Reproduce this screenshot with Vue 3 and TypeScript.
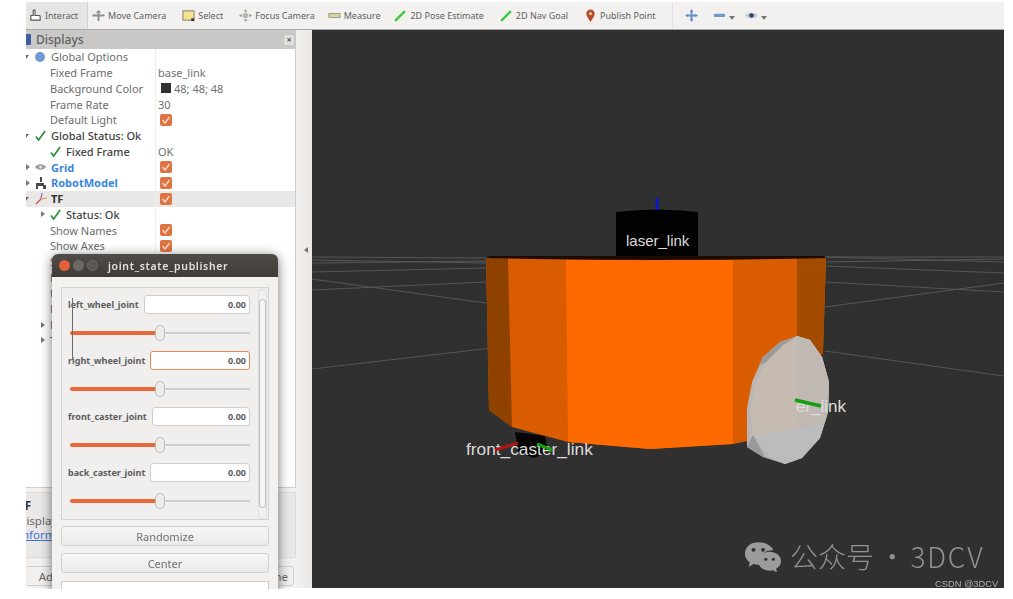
<template>
  <div class="page">
    <div class="shot">
      <div class="toolbar">
        <div
          v-for="tool in tools"
          :key="tool.name"
          class="tool"
          :class="[tool.name, { active: tool.name === 'interact' }]"
        >
          <svg v-if="tool.icon" class="tool-icon" viewBox="0 0 14 14">
            <template v-if="tool.icon === 'hand'">
              <path d="M2 7h9a1 1 0 0 1 1 1v4H2z" fill="#fff" stroke="#555" stroke-width="1.2" />
              <path d="M4.5 7V2a1 1 0 0 1 2 0v5" fill="#fff" stroke="#555" stroke-width="1.2" />
            </template>
            <template v-else-if="tool.icon === 'move'">
              <path d="M7 1l3 3H8v2h4V5l2 2-2 1V8H8v5H6V8H2v1L0 7l2-2v1h4V4H4z" fill="#8d918d" />
            </template>
            <template v-else-if="tool.icon === 'select'">
              <rect x="1" y="2" width="12" height="10" fill="#f7e58c" stroke="#777" />
              <rect x="10" y="10" width="3" height="3" fill="#333" />
            </template>
            <template v-else-if="tool.icon === 'focus'">
              <path d="M7 0l2 3H5zM7 14l2-3H5zM0 7l3-2v4zM14 7l-3-2v4z" fill="#9a9d9a" />
              <circle cx="7" cy="7" r="3" fill="#b5b8b5" />
            </template>
            <template v-else-if="tool.icon === 'ruler'">
              <rect x="1" y="5" width="12" height="4" fill="#d8d39a" stroke="#777" stroke-width=".7" />
            </template>
            <template v-else-if="tool.icon === 'arrow'">
              <path d="M2 12L11 3" stroke="#3ccb3c" stroke-width="2.6" stroke-linecap="round" />
            </template>
            <template v-else-if="tool.icon === 'pin'">
              <path d="M7 14C5 10 2.500 8 2.500 5a4.500 4.500 0 0 1 9 0c0 3-2.500 5-4.500 9z" fill="#b8492b" />
              <circle cx="7" cy="5" r="1.600" fill="#e9d0a8" />
            </template>
            <template v-else-if="tool.icon === 'plus'">
              <path d="M7 0l2 3H8v3h3V5l3 2-3 2V8H8v3h1l-2 3-2-3h1V8H3v1L0 7l3-2v1h3V3H5z" fill="#5f8fd0" />
            </template>
            <template v-else-if="tool.icon === 'minus'">
              <rect x="1" y="5" width="12" height="3.500" rx="1" fill="#6f97d0" />
            </template>
            <template v-else-if="tool.icon === 'eye'">
              <path d="M0 7c3-4 11-4 14 0-3 4-11 4-14 0z" fill="#c3cbd8" />
              <circle cx="7" cy="7" r="2.500" fill="#36456b" />
            </template>
          </svg>
          <span v-if="tool.label">{{ tool.label }}</span>
          <i v-if="tool.menu" class="tool-caret"></i>
        </div>
      </div>

      <div class="main">
        <aside class="dock">
          <div class="dock-head">
            <svg class="dock-icon" viewBox="0 0 12 14">
              <rect x="0" y="1" width="11" height="11" rx="1" fill="#3d5f9e" />
            </svg>
            <span>Displays</span>
            <b class="dock-close">×</b>
          </div>
          <div class="tree">
            <div
              v-for="row in rows"
              :key="row.id"
              class="row"
              :class="{ selected: row.selected }"
            >
              <div class="name" :class="row.level">
                <i v-if="row.arrow" class="arrow" :class="row.arrow"></i>
                <span v-if="row.icon" class="slot">
                  <svg v-if="row.icon === 'check'" viewBox="0 0 12 12" width="11" height="11">
                    <path d="M1 7l3 4 7-10" fill="none" stroke="#2f8f3a" stroke-width="1.800" />
                  </svg>
                  <i v-else-if="row.icon === 'globe'" class="globe"></i>
                  <svg v-else-if="row.icon === 'grid'" viewBox="0 0 12 8" width="11" height="8">
                    <path d="M0 4c3-4 9-4 12 0-3 4-9 4-12 0z" fill="#9b9b9b" />
                    <circle cx="6" cy="4" r="1.500" fill="#eee" />
                  </svg>
                  <svg v-else-if="row.icon === 'robot'" viewBox="0 0 12 12" width="12" height="12">
                    <path d="M5 0h2v5H5zM1 6h8v3H1zM1 9h2v3H1zM8 8h3v4H8z" fill="#4a4a4a" />
                  </svg>
                  <svg v-else-if="row.icon === 'tf'" viewBox="0 0 12 12" width="12" height="12">
                    <path d="M1 11L6 6" stroke="#d04a4a" stroke-width="1.200" />
                    <path d="M6 6l1-6" stroke="#8a5ac0" stroke-width="1.200" />
                    <path d="M6 6l6-1" stroke="#d9a04a" stroke-width="1.200" />
                  </svg>
                </span>
                <span class="label" :class="row.tone">{{ row.label }}</span>
              </div>
              <div class="value">
                <span v-if="row.swatch" class="swatch"></span>
                <span v-if="row.value">{{ row.value }}</span>
                <span v-if="row.checked" class="checkbox">
                  <svg viewBox="0 0 12 12" width="12" height="12">
                    <path d="M2.500 6l2.500 3 4.500-6" fill="none" stroke="#f6d9c8" stroke-width="1.400" />
                  </svg>
                </span>
              </div>
            </div>
          </div>
          <div class="help">
            <strong>TF</strong>
            <span>Displays the TF transform hierarchy.</span>
            <a>Information</a>
          </div>
          <div class="dock-actions">
            <button class="add">Add</button>
            <button class="rename">Rename</button>
          </div>
        </aside>

        <div class="splitter"><i></i></div>

        <div class="view">
          <svg class="scene" viewBox="0 0 692 558">
            <g transform="translate(-312 -30)">
              <path
                v-for="(line, i) in gridLines"
                :key="i"
                :d="line"
                stroke="#565656"
                stroke-width="1.200"
                fill="none"
              />
              <path d="M515 432l30 4 3 16-14 6-16-6z" fill="#050505" />
              <path d="M486 258h340l-3 92-20 50-50 40-20 4-83 5-82-7-56-15-23-17z" fill="#d95c00" />
              <path d="M486 258h22l4 169-23-17z" fill="#8f4200" />
              <path d="M797 258h29l-3 96-26 16z" fill="#a34c00" />
              <path d="M566 260h167v184l-83 5-82-7z" fill="#ff6a00" />
              <path d="M616 212q41-5 82 0v47h-82z" fill="#020202" />
              <path d="M486 258q170 4 340 0l-2-2H490z" fill="#1c0b00" />
              <path d="M657 198v12" stroke="#0b18c8" stroke-width="3" />
              <text x="626" y="246" class="tag tag-md">laser_link</text>

              <!-- wheel: rim, face, then the grey lower part of the face -->
              <path
                d="M797 336l13 4 12 17 7 25-1 30-8 26-18 20-17 6-22-7-16-10v-39l5-26 11-25 17-15z"
                fill="#b9b6b3"
              />
              <path
                d="M797 336l13 4 12 17 7 25-1 30-3 10-18 5-27 5-27 3-3-23 5-27 10-22 18-18z"
                fill="#c6bbb1"
              />
              <path d="M797 336l13 4 12 17 7 25-1 30-3 10-18 5-10 1z" fill="#c0b9b3" />
              <path d="M797 336l-17 6-17 15-4 8 6-2 18-18z" fill="#9c9a97" />
              <path d="M753 435l27-3 27-5 18-5-5 16-18 20-17 6-15-7z" fill="#bcbcbc" />
              <path d="M747 447l6-12 12 22 20 7-22-7z" fill="#9a9a9a" />
              <text x="796" y="412" class="tag tag-lg">er_link</text>
              <path d="M795 400l26 6" stroke="#12a012" stroke-width="3.500" />

              <text x="466" y="455" class="tag tag-xl">front_caster_link</text>
              <path d="M495 450l23-7" stroke="#b01818" stroke-width="3" />
              <path d="M537 444l15 6" stroke="#12a012" stroke-width="3" />
            </g>
          </svg>
        </div>
      </div>

      <div class="window">
        <div class="titlebar">
          <i class="light red"></i>
          <i class="light"></i>
          <i class="light dim"></i>
          <span class="title">joint_state_publisher</span>
        </div>
        <div class="window-body">
          <div class="frame">
            <div class="joints">
              <div v-for="joint in joints" :key="joint.name" class="joint">
                <div class="joint-top">
                  <label>{{ joint.name }}</label>
                  <div class="input" :class="{ focus: joint.focus }">{{ joint.value.toFixed(2) }}</div>
                </div>
                <div class="slider">
                  <div class="slider-fill" :style="{ width: joint.pos * 100 + '%' }"></div>
                  <div class="slider-thumb" :style="{ left: joint.pos * 100 + '%' }"></div>
                </div>
              </div>
            </div>
            <div class="scroll">
              <i class="scroll-thumb"></i>
            </div>
            <i class="glitch"></i>
          </div>
          <button class="win-btn">Randomize</button>
          <button class="win-btn">Center</button>
          <div class="combo"></div>
        </div>
      </div>
    </div>

    <div class="mark">
      <svg class="mark-logo" viewBox="0 0 40 32">
        <path
          d="M15 1C7 1 1 6 1 13c0 4 2 7 5 9l-1 5 5-3c2 .6 3 .8 5 .8 1 0 1.500 0 2-.1-.4-1.200-.6-2.400-.6-3.700 0-6.500 6-11.500 13.400-11.500h1C29 4.500 22.500 1 15 1z"
          fill="#9b9b9b"
        />
        <path
          d="M39 21c0-6-5.700-10-12-10s-12 4-12 10 5.700 10 12 10c1.300 0 2.600-.2 3.800-.5l4 2.500-1-4c3.200-2 5.200-4.700 5.200-8z"
          fill="#9b9b9b"
        />
        <circle cx="10" cy="9" r="2" fill="#2e2e2e" />
        <circle cx="20" cy="9" r="2" fill="#2e2e2e" />
        <circle cx="23" cy="19" r="1.600" fill="#2e2e2e" />
        <circle cx="31" cy="19" r="1.600" fill="#2e2e2e" />
      </svg>
      <span class="mark-text">公众号 · <span class="mark-latin">3DCV</span></span>
    </div>
    <div class="credit">CSDN @3DCV</div>
  </div>
</template>

<script setup lang="ts">
interface Tool {
  name: string
  label?: string
  icon?: string
  menu?: boolean
}

interface TreeRow {
  id: number
  label: string
  level: 'top' | 'sub' | 'prop' | 'branch'
  arrow?: 'open' | 'closed'
  icon?: string
  tone?: string
  value?: string
  swatch?: boolean
  checked?: boolean
  selected?: boolean
}

const tools: Tool[] = [
  { name: 'interact', label: 'Interact', icon: 'hand' },
  { name: 'move', label: 'Move Camera', icon: 'move' },
  { name: 'select', label: 'Select', icon: 'select' },
  { name: 'focus', label: 'Focus Camera', icon: 'focus' },
  { name: 'measure', label: 'Measure', icon: 'ruler' },
  { name: 'pose', label: '2D Pose Estimate', icon: 'arrow' },
  { name: 'nav', label: '2D Nav Goal', icon: 'arrow' },
  { name: 'publish', label: 'Publish Point', icon: 'pin' },
  { name: 'add', icon: 'plus' },
  { name: 'remove', icon: 'minus', menu: true },
  { name: 'eye', icon: 'eye', menu: true },
]

const rows: TreeRow[] = [
  { id: 1, label: 'Global Options', level: 'top', arrow: 'open', icon: 'globe' },
  { id: 2, label: 'Fixed Frame', level: 'prop', value: 'base_link' },
  { id: 3, label: 'Background Color', level: 'prop', swatch: true, value: '48; 48; 48' },
  { id: 4, label: 'Frame Rate', level: 'prop', value: '30' },
  { id: 5, label: 'Default Light', level: 'prop', checked: true },
  { id: 6, label: 'Global Status: Ok', level: 'top', arrow: 'open', icon: 'check', tone: 'strong' },
  { id: 7, label: 'Fixed Frame', level: 'sub', icon: 'check', tone: 'strong', value: 'OK' },
  { id: 8, label: 'Grid', level: 'top', arrow: 'closed', icon: 'grid', tone: 'blue', checked: true },
  { id: 9, label: 'RobotModel', level: 'top', arrow: 'closed', icon: 'robot', tone: 'blue', checked: true },
  { id: 10, label: 'TF', level: 'top', arrow: 'open', icon: 'tf', tone: 'bold', checked: true, selected: true },
  { id: 11, label: 'Status: Ok', level: 'sub', arrow: 'closed', icon: 'check', tone: 'strong' },
  { id: 12, label: 'Show Names', level: 'prop', checked: true },
  { id: 13, label: 'Show Axes', level: 'prop', checked: true },
  { id: 14, label: 'Show Arrows', level: 'prop', checked: true },
  { id: 15, label: 'Marker Scale', level: 'prop', value: '1' },
  { id: 16, label: 'Update Interval', level: 'prop', value: '0' },
  { id: 17, label: 'Frame Timeout', level: 'prop', value: '15' },
  { id: 18, label: 'Frames', level: 'branch', arrow: 'closed' },
  { id: 19, label: 'Tree', level: 'branch', arrow: 'closed' },
]

const joints = [
  { name: 'left_wheel_joint', value: 0, pos: 0.5, focus: false },
  { name: 'right_wheel_joint', value: 0, pos: 0.5, focus: true },
  { name: 'front_caster_joint', value: 0, pos: 0.5, focus: false },
  { name: 'back_caster_joint', value: 0, pos: 0.5, focus: false },
]

const gridLines = [
  'M312 257L486 258',
  'M312 260L486 263',
  'M312 263L486 261',
  'M312 272L486 268',
  'M312 279L486 303',
  'M312 290L486 282',
  'M312 369L500 347',
  'M825 257L1004 257',
  'M825 257L1004 262',
  'M825 262L1004 259',
  'M825 266L1004 273',
  'M825 282L1004 292',
  'M825 307L1004 283',
  'M825 351L1004 376',
]
</script>

<style>
html,
body {
  margin: 0;
  background: #fff;
}
</style>

<style scoped>
.page {
  position: relative;
  width: 1013px;
  height: 599px;
  overflow: hidden;
  background: #fff;
  font-family: "Noto Sans", "Liberation Sans", sans-serif;
}

.shot {
  position: relative;
  width: 978px;
  height: 587px;
  margin-left: 26px;
  padding-top: 2px;
  overflow: hidden;
  filter: blur(0.7px);
}

.toolbar {
  display: flex;
  align-items: center;
  height: 28px;
  background: #f2f1f0;
  border-bottom: 1px solid #a9a9a7;
  box-sizing: border-box;
  color: #5e5e5e;
  font-size: 9px;
}

.tool {
  display: flex;
  align-items: center;
  gap: 3px;
  height: 100%;
  padding: 0 8px;
  white-space: nowrap;
}

.tool.active {
  width: 62px;
  box-sizing: border-box;
  padding: 0 3px;
  background: #e6e5e3;
  border-right: 1px solid #d2d1cf;
}

.tool.move {
  padding-left: 4px;
}

.tool.measure {
  padding-left: 5px;
}

.tool.pose {
  padding-left: 6px;
}

.tool.add {
  margin-left: 8px;
  border-left: 1px solid #e2e1df;
  padding-left: 12px;
}

.tool.remove {
  padding: 0 0 0 7px;
}

.tool.eye {
  padding: 0 0 0 10px;
}

.tool-icon {
  width: 13px;
  height: 13px;
  flex: none;
}

.tool-caret {
  width: 0;
  height: 0;
  margin-top: 4px;
  border: 3px solid transparent;
  border-top: 4px solid #777;
  border-bottom: 0;
}

.main {
  display: flex;
  height: 558px;
}

.dock {
  display: flex;
  flex-direction: column;
  width: 270px;
  flex: none;
  background: #f2f1f0;
}

.dock-head {
  display: flex;
  align-items: center;
  height: 19px;
  flex: none;
  background: #c9c8c6;
  color: #5f5f5f;
  font-size: 12px;
  font-weight: 500;
}

.dock-icon {
  width: 12px;
  height: 14px;
  margin-left: -6px;
  margin-right: 4px;
}

.dock-close {
  margin-left: auto;
  margin-right: 2px;
  width: 10px;
  height: 10px;
  line-height: 9px;
  text-align: center;
  font-size: 9px;
  color: #555;
  background: #e2e1df;
  border-radius: 2px;
}

.tree {
  height: 439px;
  flex: none;
  background: #fff;
  border-right: 1px solid #cfcecc;
  border-bottom: 1px solid #cfcecc;
  box-sizing: border-box;
  font-size: 11px;
  color: #6c6c6c;
}

.row {
  display: flex;
  height: 15.75px;
  align-items: center;
}

.row.selected {
  background: #e9e8e6;
}

.name {
  display: flex;
  align-items: center;
  width: 129px;
  height: 100%;
  flex: none;
  box-sizing: border-box;
  white-space: nowrap;
}

.name.sub,
.name.branch {
  padding-left: 15px;
}

.name.sub:not(:has(.arrow)) {
  padding-left: 24px;
}

.name.prop {
  padding-left: 24px;
}

.arrow {
  display: block;
  width: 9px;
  flex: none;
  height: 0;
  box-sizing: border-box;
}

.arrow::before {
  content: "";
  display: block;
  width: 0;
  height: 0;
}

.arrow.closed::before {
  margin-top: -3px;
  border-left: 4px solid #777;
  border-top: 3px solid transparent;
  border-bottom: 3px solid transparent;
}

.arrow.open::before {
  margin-top: -2px;
  margin-left: -3px;
  border-top: 4px solid #666;
  border-left: 3px solid transparent;
  border-right: 3px solid transparent;
}

.slot {
  display: flex;
  align-items: center;
  justify-content: flex-start;
  width: 16px;
  flex: none;
}

.globe {
  display: block;
  width: 10px;
  height: 10px;
  border-radius: 50%;
  background: #6e9bd6;
}

.label.strong {
  color: #444;
  font-weight: 500;
}

.label.blue {
  color: #3a86d8;
  font-weight: 700;
}

.label.bold {
  color: #333;
  font-weight: 700;
}

.value {
  display: flex;
  align-items: center;
  height: 100%;
  flex: 1;
  padding-left: 2px;
  border-left: 1px solid #efefef;
  color: #707070;
}

.swatch {
  width: 10px;
  height: 10px;
  margin: 0 3px 0 3px;
  background: #303030;
}

.checkbox {
  display: block;
  width: 12px;
  height: 12px;
  margin-left: 2px;
  border-radius: 2px;
  background: #df7443;
}

.help {
  display: flex;
  flex-direction: column;
  height: 66px;
  margin-top: 4px;
  padding-top: 6px;
  box-sizing: border-box;
  flex: none;
  overflow: hidden;
  background: #e9e8e6;
  border: 1px solid #dcdbd9;
  border-left: 0;
  font-size: 11.5px;
  line-height: 14.5px;
  color: #666;
  white-space: nowrap;
}

.help > * {
  margin-left: -8px;
}

.help strong {
  color: #333;
}

.help a {
  color: #3f6fd8;
  text-decoration: underline;
}

.dock-actions {
  display: flex;
  justify-content: space-between;
  margin-top: 8px;
  margin-right: 2px;
}

.dock-actions button {
  height: 20px;
  padding: 0;
  background: #f1f0ee;
  border: 1px solid #cfcecc;
  border-radius: 3px;
  font: 11.5px "Noto Sans", "Liberation Sans", sans-serif;
  color: #666;
}

.dock-actions .add {
  width: 48px;
  border-left: 0;
}

.dock-actions .rename {
  width: 60px;
  padding-right: 5px;
  text-align: right;
}

.splitter {
  display: flex;
  align-items: center;
  width: 16px;
  flex: none;
  padding-bottom: 118px;
  box-sizing: border-box;
  background: linear-gradient(90deg, #f3f2f1, #e9e8e7);
}

.splitter i {
  margin-left: 8px;
  border-right: 4px solid #777;
  border-top: 3px solid transparent;
  border-bottom: 3px solid transparent;
}

.view {
  flex: 1;
  background: #303030;
}

.scene {
  display: block;
  width: 692px;
  height: 558px;
}

.tag {
  font-family: "Liberation Sans", sans-serif;
  fill: #dcdcdc;
}

.tag-md {
  font-size: 15px;
}

.tag-lg {
  font-size: 17px;
  fill: #dfdcd9;
}

.tag-xl {
  font-size: 17.300px;
}

.window {
  position: absolute;
  left: 26px;
  top: 254px;
  width: 226px;
  height: 340px;
  border-radius: 6px 6px 0 0;
  background: #f2f1f0;
  box-shadow: 0 2px 12px rgba(0, 0, 0, 0.55);
  overflow: hidden;
}

.titlebar {
  display: flex;
  align-items: center;
  height: 23px;
  padding-left: 7px;
  background: linear-gradient(#504c47, #3f3b37);
}

.light {
  width: 11px;
  height: 11px;
  margin-right: 3px;
  border-radius: 50%;
  background: #6c6964;
}

.light.red {
  background: #e0613a;
}

.light.dim {
  background: #5a5752;
  border: 1px solid #6f6c67;
  box-sizing: border-box;
}

.title {
  margin-left: 7px;
  font-size: 10.5px;
  font-weight: 600;
  letter-spacing: 0.65px;
  color: #e6e2da;
}

.window-body {
  display: flex;
  flex-direction: column;
  gap: 6px;
  padding: 10px 9px 0;
}

.frame {
  position: relative;
  display: flex;
  height: 233px;
  flex: none;
  box-sizing: border-box;
  padding: 0 1px 0 6px;
  border: 1px solid #d4d3d1;
  background: #f0efee;
}

.joints {
  flex: 1;
  padding: 7px 8px 0 0;
  min-width: 0;
}

.joint {
  height: 56px;
}

.joint-top {
  display: flex;
  align-items: center;
  gap: 5px;
  height: 19px;
}

.joint-top label {
  font-size: 9px;
  font-weight: 700;
  color: #5c5c5c;
  white-space: nowrap;
}

.input {
  flex: 1;
  height: 19px;
  line-height: 18px;
  box-sizing: border-box;
  padding-right: 3px;
  background: #fff;
  border: 1px solid #cfcecc;
  border-radius: 3px;
  text-align: right;
  font-size: 9px;
  font-weight: 700;
  color: #5c5c5c;
}

.input.focus {
  border: 1.5px solid #e38a60;
}

.slider {
  position: relative;
  height: 2px;
  margin: 18px 0 0 2px;
  background: #d0cfcd;
}

.slider-fill {
  position: absolute;
  left: 0;
  top: -1px;
  height: 4px;
  border-radius: 2px;
  background: #e8683a;
}

.slider-thumb {
  position: absolute;
  top: -7px;
  width: 10px;
  height: 16px;
  margin-left: -5px;
  box-sizing: border-box;
  border: 1px solid #b9b8b6;
  border-radius: 5px;
  background: #ececea;
}

.scroll {
  width: 9px;
  margin-top: 1px;
  height: 230px;
  flex: none;
  box-sizing: border-box;
  padding-top: 9px;
  border: 1px solid #dedddb;
  border-radius: 4px;
  background: #f2f1f0;
}

.scroll-thumb {
  display: block;
  width: 100%;
  height: 209px;
  box-sizing: border-box;
  border: 1px solid #bdbcba;
  border-radius: 4px;
  background: #f6f5f4;
}

.glitch {
  position: absolute;
  left: 10px;
  top: 10px;
  width: 1px;
  height: 62px;
  background: #6d6d6d;
}

.win-btn {
  height: 20px;
  flex: none;
  padding: 0;
  background: linear-gradient(#f7f6f5, #ebeae8);
  border: 1px solid #d2d1cf;
  border-radius: 3px;
  font: 11px "Noto Sans", "Liberation Sans", sans-serif;
  color: #707070;
}

.win-btn + .win-btn {
  margin-top: 1px;
}

.combo {
  height: 24px;
  margin-top: 2px;
  flex: none;
  background: #fff;
  border: 1px solid #cfcecc;
}

.mark {
  position: absolute;
  left: 744px;
  top: 537px;
  display: flex;
  align-items: center;
  gap: 8px;
  height: 38px;
}

.mark-logo {
  width: 38px;
  height: 31px;
}

.mark-text {
  font-family: "Noto Sans CJK SC", "Noto Sans", sans-serif;
  font-size: 28px;
  font-weight: 300;
  word-spacing: -2px;
  color: #929292;
  white-space: nowrap;
}

.mark-latin {
  letter-spacing: 1.8px;
}

.credit {
  position: absolute;
  left: 935px;
  top: 578px;
  font-family: "Liberation Sans", sans-serif;
  font-size: 9.300px;
  line-height: 12px;
  color: #b0b0b0;
}
</style>
